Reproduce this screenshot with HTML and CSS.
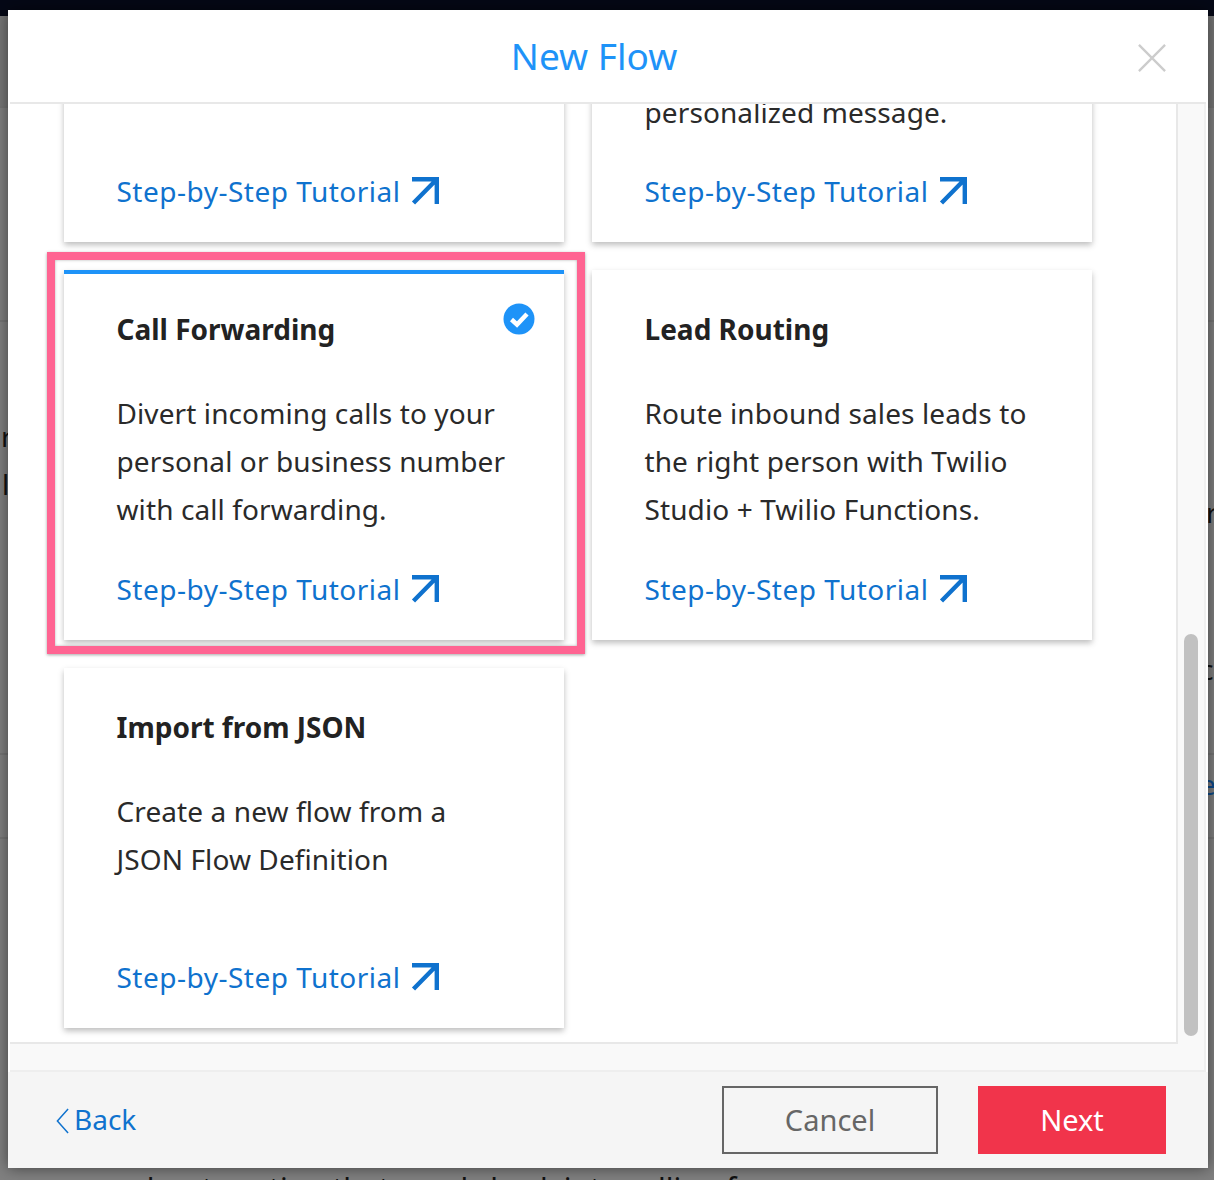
FILE: index.html
```html
<!DOCTYPE html>
<html lang="en">
<head>
  <meta charset="UTF-8" />
  <title>New Flow</title>
  <link rel="stylesheet" href="styles.css">
</head>
<body>
  <!-- page behind the dialog, only slivers of it show -->
  <div class="page">
    <div class="topbar"></div>
    <div class="band band-head"></div>
    <div class="band band-one"></div>
    <div class="band band-two">
      <div class="bg-left">
        <p class="bg-r">r</p>
        <p class="bg-l">l</p>
      </div>
      <div class="bg-right">
        <p class="bg-n">n</p>
        <p class="bg-rr">r</p>
        <p class="bg-c">c</p>
      </div>
    </div>
    <div class="band band-three">
      <div class="bg-right">
        <p class="bg-e">e</p>
      </div>
    </div>
    <div class="band band-four">
      <p class="bg-bottom">about routing that needs back into calling for</p>
    </div>
  </div>

  <div class="modal">
    <div class="modal-head">
      <h1>New Flow</h1>
      <svg class="close-icon" viewBox="0 0 30 30"><path d="M1 1 L29 29 M29 1 L1 29" /></svg>
    </div>

    <div class="modal-main">
      <div class="panel">
        <div class="cards">
          <div class="card card-cut">
            <a class="tutorial" href="#">Step-by-Step Tutorial
              <svg class="arrow" viewBox="0 0 28 28"><path d="M1 2.2 H25.8 V27 M25.8 2.2 L2.5 26" /></svg>
            </a>
          </div>
          <div class="card card-cut">
            <p class="card-text">personalized message.</p>
            <a class="tutorial" href="#">Step-by-Step Tutorial
              <svg class="arrow" viewBox="0 0 28 28"><path d="M1 2.2 H25.8 V27 M25.8 2.2 L2.5 26" /></svg>
            </a>
          </div>

          <div class="card card-selected">
            <h3>Call Forwarding</h3>
            <svg class="check" viewBox="0 0 32 32">
              <circle cx="16" cy="16" r="15.5" />
              <path d="M8.5 16.5 L14 21.5 L24 11" />
            </svg>
            <p class="card-text">Divert incoming calls to your personal or business number with call forwarding.</p>
            <a class="tutorial" href="#">Step-by-Step Tutorial
              <svg class="arrow" viewBox="0 0 28 28"><path d="M1 2.2 H25.8 V27 M25.8 2.2 L2.5 26" /></svg>
            </a>
            <div class="highlight"></div>
          </div>
          <div class="card">
            <h3>Lead Routing</h3>
            <p class="card-text">Route inbound sales leads to the right person with Twilio Studio + Twilio Functions.</p>
            <a class="tutorial" href="#">Step-by-Step Tutorial
              <svg class="arrow" viewBox="0 0 28 28"><path d="M1 2.2 H25.8 V27 M25.8 2.2 L2.5 26" /></svg>
            </a>
          </div>

          <div class="card card-short">
            <h3>Import from JSON</h3>
            <p class="card-text">Create a new flow from a<br>JSON Flow Definition</p>
            <a class="tutorial" href="#">Step-by-Step Tutorial
              <svg class="arrow" viewBox="0 0 28 28"><path d="M1 2.2 H25.8 V27 M25.8 2.2 L2.5 26" /></svg>
            </a>
          </div>
        </div>
      </div>
      <div class="track">
        <div class="thumb"></div>
      </div>
    </div>

    <div class="modal-foot">
      <a class="back" href="#">
        <svg class="chevron" viewBox="0 0 14 28"><path d="M13 1 L1.5 14 L13 27" /></svg>
        Back
      </a>
      <div class="foot-btns">
        <button class="btn-cancel">Cancel</button>
        <button class="btn-next">Next</button>
      </div>
    </div>
  </div>
</body>
</html>
```

FILE: styles.css
```css
* {
  box-sizing: border-box;
}

html, body {
  margin: 0;
  height: 100%;
  overflow: hidden;
}

body {
  font-family: "Noto Sans", Arial, sans-serif;
  background: #808080;
  color: #222;
  position: relative;
}

/* page behind the dialog */
.page {
  height: 1180px;
  display: flex;
  flex-direction: column;
  overflow: hidden;
}

.topbar {
  height: 16px;
  background: #050816;
}

.band {
  border-bottom: 2px solid #757575;
  display: flex;
  justify-content: space-between;
}

.band-head { height: 92px; background: #777; }
.band-one { height: 214px; }
.band-two { height: 433px; }
.band-three { height: 84px; justify-content: flex-end; }
.band-four { flex: 1; border-bottom: none; align-items: flex-end; }

.bg-left p,
.bg-right p,
.bg-bottom {
  margin: 0;
  font-size: 28px;
  line-height: 48px;
  color: #111;
}

.bg-left { width: 8px; overflow: hidden; }
.bg-right { width: 6px; overflow: hidden; white-space: nowrap; }

.bg-left .bg-r { margin-top: 90px; padding-left: 1px; }
.bg-left .bg-l { padding-left: 2px; }
.bg-right .bg-n { margin-top: 24px; margin-left: -16px; }
.bg-right .bg-rr { margin-top: 94px; margin-left: -2px; }
.bg-right .bg-c { margin-top: 109px; margin-left: -8px; }
.bg-right .bg-e { margin-top: 5px; margin-left: -8px; color: #0d4a8a; }

.band-four .bg-bottom {
  margin-left: 130px;
  margin-bottom: -33px;
  white-space: nowrap;
  font-size: 30px;
}

/* dialog */
.modal {
  position: absolute;
  top: 10px;
  left: 8px;
  width: 1200px;
  height: 1158px;
  display: flex;
  flex-direction: column;
  background: #fff;
  box-shadow: 0 0 14px rgba(0, 0, 0, 0.5);
}

.modal-head {
  height: 94px;
  margin: 0 2px;
  padding-right: 28px;
  border-bottom: 2px solid #e8e8e8;
  display: flex;
  align-items: center;
  justify-content: center;
  position: relative;
}

.modal-head h1 {
  margin: 0 0 2px;
  font-size: 37px;
  font-weight: 400;
  color: #1e93f8;
}

.close-icon {
  position: absolute;
  top: 34px;
  right: 40px;
  width: 28px;
  height: 28px;
  fill: none;
  stroke: #ccc;
  stroke-width: 2.5;
}

.modal-main {
  flex: 1;
  min-height: 0;
  display: flex;
  margin: 0 2px;
  background: #f9f9f9;
  border-bottom: 2px solid #eee;
}

.panel {
  flex: 1;
  min-width: 0;
  margin-bottom: 26px;
  padding: 0 0 14px 54px;
  background: #fff;
  border-right: 2px solid #e8e8e8;
  border-bottom: 2px solid #e8e8e8;
  display: flex;
  flex-direction: column;
  justify-content: flex-end;
  overflow: hidden;
}

.cards {
  display: grid;
  grid-template-columns: 500px 500px;
  gap: 28px;
}

.card {
  position: relative;
  min-height: 370px;
  padding: 35px 40px 27px 52.5px;
  background: #fff;
  border-top: 4px solid transparent;
  box-shadow: 0 3px 6px rgba(0, 0, 0, 0.26);
  display: flex;
  flex-direction: column;
}

.card-cut {
  min-height: 200px;
  justify-content: flex-end;
}

.card-short {
  min-height: 360px;
}

.card-selected {
  border-top-color: #1e93f8;
}

.card h3 {
  margin: 0;
  font-size: 28px;
  line-height: 40px;
  font-weight: 700;
  color: #222;
}

.card-text {
  margin: 40px 0 0;
  font-size: 28px;
  line-height: 48px;
  letter-spacing: 0.1px;
  color: #2a2a2a;
}

.card-cut .card-text {
  margin: 0;
}

.tutorial {
  margin-top: auto;
  padding-top: 31px;
  display: flex;
  align-items: center;
  gap: 11px;
  font-size: 28px;
  line-height: 48px;
  letter-spacing: 0.5px;
  color: #0f72ce;
  text-decoration: none;
}

.card-cut .tutorial {
  margin-top: 0;
}

.arrow {
  width: 28px;
  height: 28px;
  fill: none;
  stroke: #0f72ce;
  stroke-width: 4.4;
}

.check {
  position: absolute;
  top: 29px;
  right: 29px;
  width: 32px;
  height: 32px;
}

.check circle {
  fill: #1e93f8;
}

.check path {
  fill: none;
  stroke: #fff;
  stroke-width: 4.5;
}

/* pink annotation around the selected card */
.highlight {
  position: absolute;
  top: -22px;
  left: -17px;
  right: -21px;
  bottom: -14px;
  border: 8px solid #ff6492;
  box-shadow: 0 1px 3px rgba(0, 0, 0, 0.35), inset 0 0 3px rgba(0, 0, 0, 0.3);
}

.track {
  width: 28px;
  padding: 0 6px 34px;
  border-right: 2px solid #f0f0f0;
  display: flex;
  align-items: flex-end;
}

.thumb {
  width: 16px;
  height: 402px;
  background: #c1c1c1;
  border-radius: 8px;
}

.modal-foot {
  height: 96px;
  padding: 14px 42px 14px 48px;
  background: #f5f5f5;
  display: flex;
  align-items: center;
  justify-content: space-between;
}

.back {
  display: flex;
  align-items: center;
  gap: 5px;
  font-size: 28px;
  padding-bottom: 2px;
  color: #0f72ce;
  text-decoration: none;
}

.chevron {
  width: 13px;
  height: 26px;
  fill: none;
  stroke: #0f72ce;
  stroke-width: 1.6;
  margin-top: 4px;
}

.foot-btns {
  display: flex;
  gap: 40px;
}

.foot-btns button {
  height: 68px;
  padding: 0 0 2px;
  font-family: inherit;
  font-size: 29px;
  border-radius: 0;
  cursor: pointer;
}

.btn-cancel {
  width: 216px;
  background: transparent;
  border: 2px solid #666;
  color: #666;
}

.btn-next {
  width: 188px;
  background: #f1344b;
  border: none;
  color: #fff;
}
```
